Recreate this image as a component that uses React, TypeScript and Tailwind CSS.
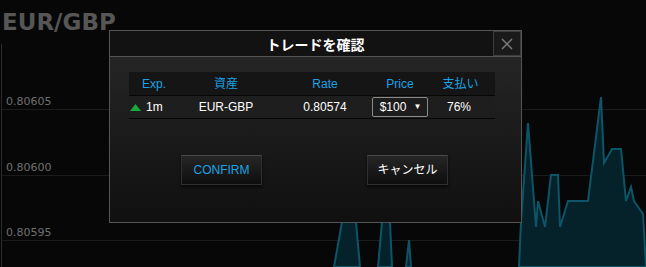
import React from "react";

const sans = "font-['Liberation_Sans','Noto_Sans_CJK_JP',sans-serif]";
const dejavu = "font-['DejaVu_Sans',sans-serif]";

const ChartLine = () => (
  <svg
    className="absolute left-0 top-0 pointer-events-none"
    width={646}
    height={267}
    viewBox="0 0 646 267"
  >
    <g fill="#05212a" stroke="#0c5568" strokeWidth={2} strokeLinejoin="miter">
      <polygon points="334,267 342,222 356,222 360,267" />
      <polygon points="378,267 382,222 390,222 392,267" />
      <polygon points="406,267 409,240 411,267" />
      <polygon points="519,267 521,222 528,123 536,227 538,201 545,227 551,175 558,175 560,227 568,201 588,201 601,97 604,163 612,149 621,149 626,201 631,187 634,201 643,214 646,267" />
    </g>
  </svg>
);

const GridRow = ({ label, h }: { label: string; h: string }) => (
  <div className={`${h} border-b border-[#1b1b1b] flex items-end pl-[4px]`}>
    <span className={`${dejavu} text-[11px] leading-[14px] text-[#6f6f6f]`}>{label}</span>
  </div>
);

export default function App() {
  return (
    <div className={`relative w-[646px] h-[267px] overflow-hidden bg-[#070707] ${sans}`}>
      <div className={`${dejavu} h-[44px] pl-[2px] pt-[8px] text-[23px] leading-[28px] font-bold text-[#565656]`}>
        EUR/GBP
      </div>
      <div className="ml-[1px] border-l border-[#2a2a2a] h-[223px]">
        <GridRow label="0.80605" h="h-[66px]" />
        <GridRow label="0.80600" h="h-[66px]" />
        <GridRow label="0.80595" h="h-[65px]" />
      </div>

      <ChartLine />

      {/* modal */}
      <div className="absolute left-[109px] top-[30px] w-[413px] h-[193px] border border-[#555] flex flex-col">
        <div className="relative h-[26px] shrink-0 bg-[#121212] border-b border-[#555] flex items-center justify-center pt-[2px]">
          <span className="text-[14px] font-bold text-white leading-[18px]">トレードを確認</span>
          <div className="absolute right-0 top-0 w-[28px] h-[25px] border border-[#3c3c3c] bg-[#1a1a1a] flex items-center justify-center">
            <svg width="12" height="12" viewBox="0 0 12 12">
              <path d="M1 1 L11 11 M11 1 L1 11" stroke="#7a7a7a" strokeWidth="1.5" />
            </svg>
          </div>
        </div>

        <div className="flex-1 bg-gradient-to-b from-[#252525] to-[#101010] pt-[15px] pl-[19px]">
          <div className="w-[366px] text-[12px] leading-[14px]">
            <div className="h-[24px] bg-[#151515] border-b border-[#050505] flex items-center text-[#1ba2e6]">
              <div className="w-[50px] flex justify-center">Exp.</div>
              <div className="w-[94px] flex justify-center">資産</div>
              <div className="w-[104px] flex justify-center">Rate</div>
              <div className="w-[46px] flex justify-center">Price</div>
              <div className="w-[72px] flex justify-center pl-[3px]">支払い</div>
            </div>
            <div className="h-[23px] bg-[#1e1e1e] border-b border-[#050505] flex items-center text-white">
              <div className="w-[50px] flex items-center pl-[1px] gap-[5px]">
                <svg width="11" height="7" viewBox="0 0 11 7">
                  <polygon points="5.5,0 11,7 0,7" fill="#19a83a" />
                </svg>
                <span>1m</span>
              </div>
              <div className="w-[94px] flex justify-center">EUR-GBP</div>
              <div className="w-[104px] flex justify-center">0.80574</div>
              <div className="w-[46px] flex justify-center">
                <div className="w-[56px] h-[20px] shrink-0 border border-[#8a8a8a] rounded-[2px] bg-[#1c1c1c] flex items-center justify-center gap-[7px] pl-[1px]">
                  <span>$100</span>
                  <span className="text-[8px] leading-[8px]">▼</span>
                </div>
              </div>
              <div className="w-[72px] flex justify-center">76%</div>
            </div>
          </div>

          <div className="flex mt-[36px] ml-[52px] gap-[105px]">
            <button className="w-[81px] h-[30px] bg-gradient-to-b from-[#262626] to-[#0e0e0e] border border-[#303030] border-t-[#4a4a4a] shadow-[0_2px_3px_rgba(0,0,0,0.7)] text-[12px] text-[#1ba2e6] flex items-center justify-center">
              CONFIRM
            </button>
            <button className="w-[81px] h-[30px] bg-gradient-to-b from-[#262626] to-[#0e0e0e] border border-[#303030] border-t-[#4a4a4a] shadow-[0_2px_3px_rgba(0,0,0,0.7)] text-[12px] text-white flex items-center justify-center">
              キャンセル
            </button>
          </div>
        </div>
      </div>
    </div>
  );
}
